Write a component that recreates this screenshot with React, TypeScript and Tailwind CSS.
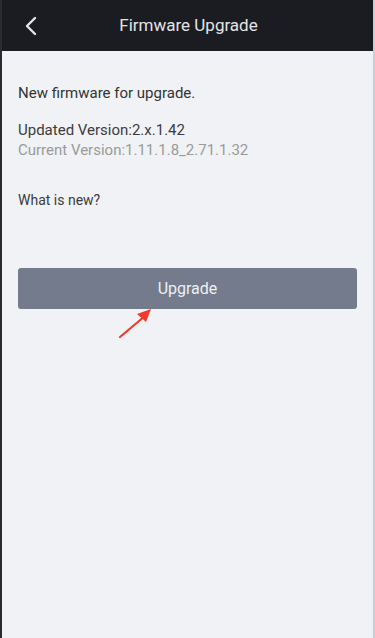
import React from 'react';

export default function App() {
  return (
    <div className="w-[375px] h-[638px] flex bg-[#f0f2f5] font-['Roboto','Liberation_Sans',sans-serif] overflow-hidden">
      <div className="w-[2px] bg-[#2a2b30]" />
      <div className="flex-1 flex flex-col">
        {/* Header */}
        <div className="h-[51px] bg-[#1b1c22] flex items-center relative">
          <button className="absolute left-[20px] top-[16px] w-[18px] h-[20px] flex items-center justify-center">
            <svg width="14" height="20" viewBox="0 0 14 20" fill="none">
              <path d="M11 2 L3 10 L11 18" stroke="#e6e6e6" strokeWidth="2.4" strokeLinecap="round" strokeLinejoin="round" />
            </svg>
          </button>
          <div className="flex-1 text-center text-[17px] text-[#e4e4e6] pl-[2px]">Firmware Upgrade</div>
        </div>

        {/* Content */}
        <div className="flex flex-col px-[16px]">
          <p className="mt-[33px] text-[15px] leading-[18px] text-[#333]">New firmware for upgrade.</p>
          <p className="mt-[19px] text-[15px] leading-[19px] text-[#3c3c3c]">Updated Version:2.x.1.42</p>
          <p className="mt-[1px] text-[15px] leading-[19px] text-[#9a9a9a]">Current Version:1.11.1.8_2.71.1.32</p>
          <p className="mt-[31px] text-[14px] leading-[18px] text-[#3c3c3c]">What is new?</p>

          <div className="relative mt-[59px]">
            <button className="w-full h-[41px] rounded-[3px] bg-[#737b8c] text-[#eef0f3] text-[16px]">
              Upgrade
            </button>
            <svg className="absolute left-[100px] top-[38px]" width="40" height="34" viewBox="0 0 40 34" fill="none">
              <path d="M2 31 L27 10" stroke="#f03a2e" strokeWidth="2.2" strokeLinecap="round" />
              <path d="M33 3 L19 8 L28 16 Z" fill="#f03a2e" />
            </svg>
          </div>
        </div>
      </div>
      <div className="w-[2px] bg-[#c9ccd1]" />
    </div>
  );
}
